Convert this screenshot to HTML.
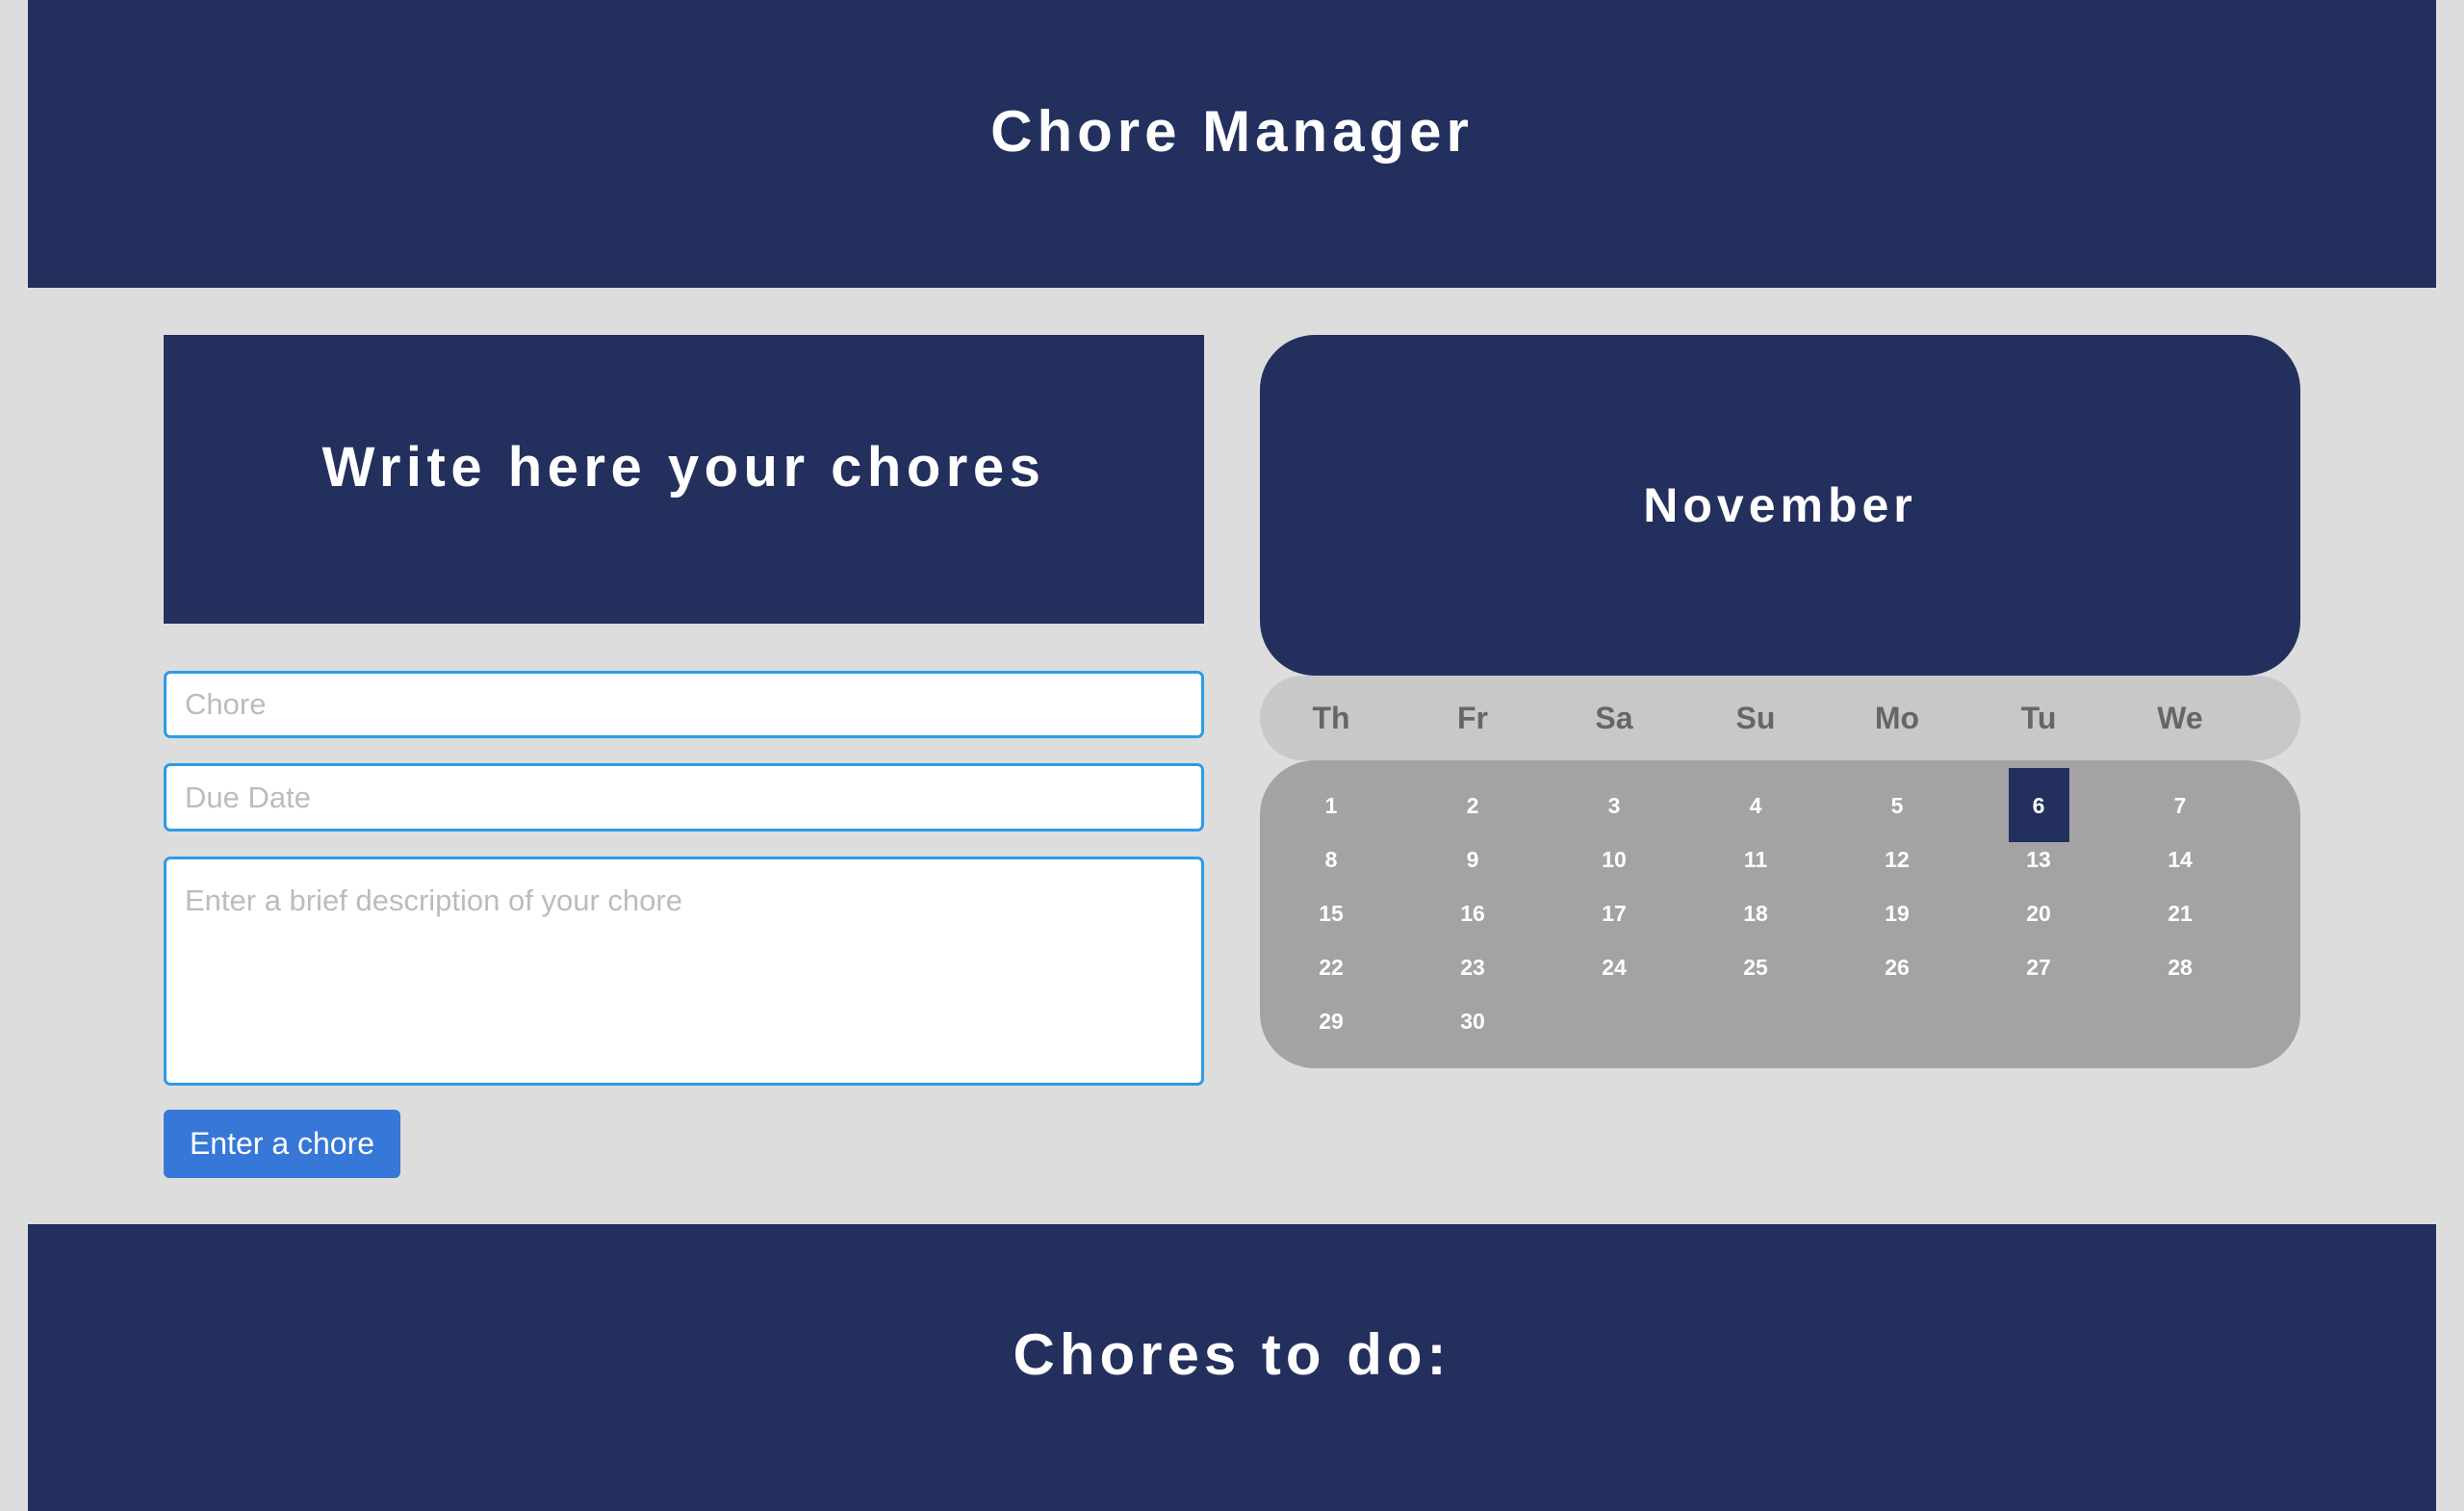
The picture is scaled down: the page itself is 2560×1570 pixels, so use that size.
<!DOCTYPE html>
<html><head><style>
*{box-sizing:border-box;margin:0;padding:0}
body{width:2560px;height:1570px;background:#dddddd;font-family:"Liberation Sans",sans-serif;position:relative;overflow:hidden}
.nav{position:absolute;background:#23305e;color:#fff;font-weight:bold;display:flex;align-items:center;justify-content:center}
.inp{position:absolute;left:170px;width:1081px;background:#fff;border:3px solid #2d9be8;border-radius:7px;color:#bcbcbc;font-size:31px;padding-left:19px}
.wd{position:absolute;top:702px;height:88px;width:100px;margin-left:-50px;line-height:88px;text-align:center;color:#666;font-weight:bold;font-size:32px}
.d{position:absolute;width:60px;margin-left:-30px;text-align:center;color:#fff;font-weight:bold;font-size:23px}
</style></head><body>
<div class="nav" style="left:29px;top:0;width:2502px;height:299px;font-size:60px;letter-spacing:5px;padding-bottom:26px">Chore Manager</div>
<div class="nav" style="left:170px;top:348px;width:1081px;height:300px;font-size:58px;letter-spacing:5.5px;padding-bottom:26px">Write here your chores</div>
<div class="nav" style="left:1309px;top:348px;width:1081px;height:354px;font-size:50px;letter-spacing:5px;border-radius:57px">November</div>
<div style="position:absolute;left:1309px;top:702px;width:1081px;height:88px;background:#c8c8c8;border-radius:44px"></div>
<div style="position:absolute;left:1309px;top:790px;width:1081px;height:320px;background:#a3a3a3;border-radius:57px"></div>
<div style="position:absolute;left:2087px;top:798px;width:63px;height:77px;background:#23305e"></div>
<div class="inp" style="top:697px;height:70px;line-height:64px">Chore</div>
<div class="inp" style="top:793px;height:71px;line-height:65px">Due Date</div>
<div class="inp" style="top:890px;height:238px;padding-top:22px;line-height:42px">Enter a brief description of your chore</div>
<div style="position:absolute;left:170px;top:1153px;width:246px;height:71px;background:#3777d8;border-radius:6px;color:#fff;font-size:32px;line-height:71px;text-align:center">Enter a chore</div>
<div class="nav" style="left:29px;top:1272px;width:2502px;height:298px;font-size:60px;letter-spacing:5px;padding-bottom:28px">Chores to do:</div>
<div style="position:absolute;left:0;top:0">
<div class="wd" style="left:1383px">Th</div>
<div class="wd" style="left:1530px">Fr</div>
<div class="wd" style="left:1677px">Sa</div>
<div class="wd" style="left:1824px">Su</div>
<div class="wd" style="left:1971px">Mo</div>
<div class="wd" style="left:2118px">Tu</div>
<div class="wd" style="left:2265px">We</div>
</div>
<div style="position:absolute;left:0;top:0">
<div class="d" style="left:1383px;top:824px">1</div><div class="d" style="left:1530px;top:824px">2</div><div class="d" style="left:1677px;top:824px">3</div><div class="d" style="left:1824px;top:824px">4</div><div class="d" style="left:1971px;top:824px">5</div><div class="d" style="left:2118px;top:824px">6</div><div class="d" style="left:2265px;top:824px">7</div>
<div class="d" style="left:1383px;top:880px">8</div><div class="d" style="left:1530px;top:880px">9</div><div class="d" style="left:1677px;top:880px">10</div><div class="d" style="left:1824px;top:880px">11</div><div class="d" style="left:1971px;top:880px">12</div><div class="d" style="left:2118px;top:880px">13</div><div class="d" style="left:2265px;top:880px">14</div>
<div class="d" style="left:1383px;top:936px">15</div><div class="d" style="left:1530px;top:936px">16</div><div class="d" style="left:1677px;top:936px">17</div><div class="d" style="left:1824px;top:936px">18</div><div class="d" style="left:1971px;top:936px">19</div><div class="d" style="left:2118px;top:936px">20</div><div class="d" style="left:2265px;top:936px">21</div>
<div class="d" style="left:1383px;top:992px">22</div><div class="d" style="left:1530px;top:992px">23</div><div class="d" style="left:1677px;top:992px">24</div><div class="d" style="left:1824px;top:992px">25</div><div class="d" style="left:1971px;top:992px">26</div><div class="d" style="left:2118px;top:992px">27</div><div class="d" style="left:2265px;top:992px">28</div>
<div class="d" style="left:1383px;top:1048px">29</div><div class="d" style="left:1530px;top:1048px">30</div>
</div>
</body></html>
